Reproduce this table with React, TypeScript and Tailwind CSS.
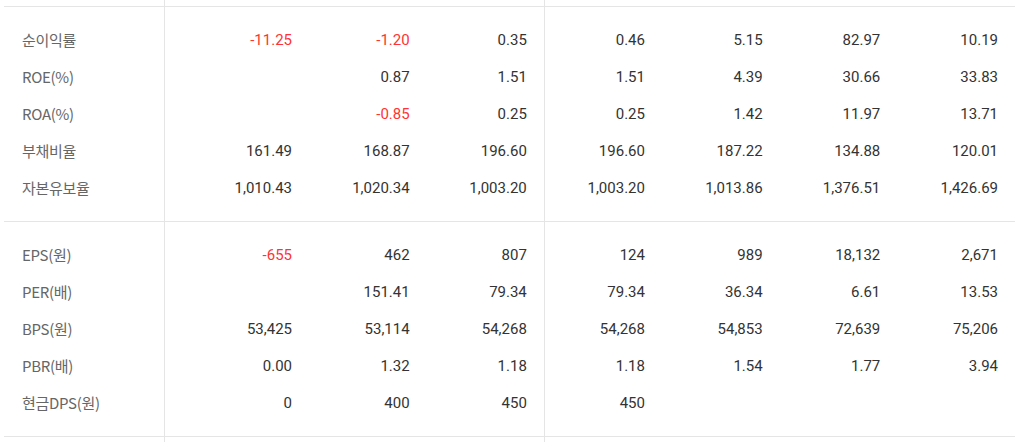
import React from "react";

const groups: { label: string; values: (string | null)[] }[][] = [
    [
        { label: "순이익률", values: ["-11.25", "-1.20", "0.35", "0.46", "5.15", "82.97", "10.19"] },
        { label: "ROE(%)", values: [null, "0.87", "1.51", "1.51", "4.39", "30.66", "33.83"] },
        { label: "ROA(%)", values: [null, "-0.85", "0.25", "0.25", "1.42", "11.97", "13.71"] },
        { label: "부채비율", values: ["161.49", "168.87", "196.60", "196.60", "187.22", "134.88", "120.01"] },
        { label: "자본유보율", values: ["1,010.43", "1,020.34", "1,003.20", "1,003.20", "1,013.86", "1,376.51", "1,426.69"] },
    ],
    [
        { label: "EPS(원)", values: ["-655", "462", "807", "124", "989", "18,132", "2,671"] },
        { label: "PER(배)", values: [null, "151.41", "79.34", "79.34", "36.34", "6.61", "13.53"] },
        { label: "BPS(원)", values: ["53,425", "53,114", "54,268", "54,268", "54,853", "72,639", "75,206"] },
        { label: "PBR(배)", values: ["0.00", "1.32", "1.18", "1.18", "1.54", "1.77", "3.94"] },
        { label: "현금DPS(원)", values: ["0", "400", "450", "450", null, null, null] },
    ],
];

const line = "border-[#e5e5e5]";

// col index 1 and 4 carry the vertical rules
const edge = (i: number) => (i === 1 || i === 4 ? `border-l ${line}` : "");

function Spacer({ h, bottom }: { h: string; bottom?: boolean }) {
    return (
        <tr className={h}>
            {Array.from({ length: 8 }).map((_, i) => (
                <td key={i} className={`${edge(i)} ${bottom ? `border-b ${line}` : ""} p-0`} />
            ))}
        </tr>
    );
}

export default function App() {
    return (
        <div className="w-[1023px] h-[443px] overflow-hidden bg-white font-['Roboto','Noto_Sans_CJK_KR',sans-serif]">
            <table className="ml-1 w-[1011px] table-fixed border-collapse text-[15px]">
                <colgroup>
                    <col className="w-[160px]" />
                    <col className="w-[145px]" />
                    <col className="w-[117.67px]" />
                    <col className="w-[117.67px]" />
                    <col className="w-[117.67px]" />
                    <col className="w-[117.67px]" />
                    <col className="w-[117.67px]" />
                    <col className="w-[117.67px]" />
                </colgroup>
                <tbody>
                    <Spacer h="h-[6px]" bottom />
                    {groups.map((rows, g) => (
                        <React.Fragment key={g}>
                            <Spacer h="h-[15px]" />
                            {rows.map((r) => (
                                <tr key={r.label} className="h-[37px]">
                                    <td className="p-0 pt-[2px] pl-[18px] text-[#666] tracking-[-0.3px] font-['Noto_Sans_CJK_KR',sans-serif]">
                                        {r.label}
                                    </td>
                                    {r.values.map((v, i) => {
                                        const neg = v !== null && v.startsWith("-");
                                        return (
                                            <td
                                                key={i}
                                                className={`${edge(i + 1)} p-0 pt-[2px] pr-[17px] text-right ${neg ? "text-[#ff3333]" : "text-[#333]"}`}
                                            >
                                                {v ?? ""}
                                            </td>
                                        );
                                    })}
                                </tr>
                            ))}
                            <Spacer h="h-[15px]" bottom />
                        </React.Fragment>
                    ))}
                    <Spacer h="h-[6px]" />
                </tbody>
            </table>
        </div>
    );
}
